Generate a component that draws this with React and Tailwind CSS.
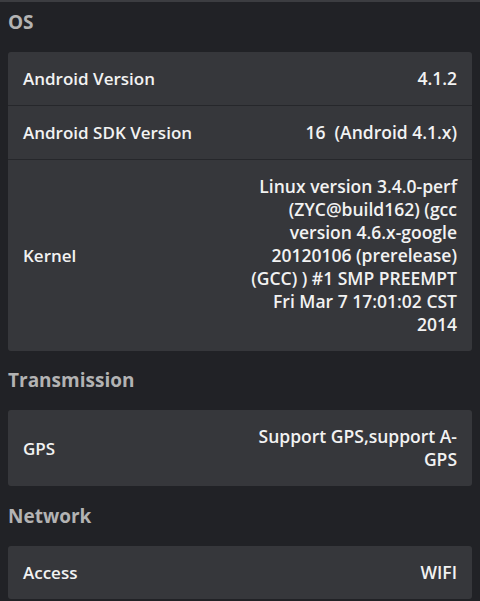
export default function App() {
  const font = { fontFamily: '"Open Sans", "DejaVu Sans", sans-serif' };
  const Row = ({ label, children, first }) => (
    <div
      className={`flex items-center justify-between px-[15px] py-[15px] ${
        first ? "" : "border-t border-[#26272b]"
      }`}
    >
      <div className="text-[17px] font-semibold leading-[23px] text-[#f2f2f2]">{label}</div>
      <div className="w-[220px] text-right text-[17.5px] font-semibold leading-[23px] text-[#f2f2f2]">
        {children}
      </div>
    </div>
  );
  const Heading = ({ children, cls }) => (
    <div className={`flex items-center px-[8px] text-[19px] font-bold text-[#b3b3b3] ${cls}`}>
      {children}
    </div>
  );
  const Card = ({ children }) => (
    <div className="ml-[8px] mr-[8px] overflow-hidden rounded-[3px] bg-[#36373b]">{children}</div>
  );
  return (
    <div className="h-[601px] w-[480px] overflow-hidden border-t-2 border-[#3c3d41] bg-[#212226]" style={font}>
      <Heading cls="h-[50px] pb-[9px]">OS</Heading>
      <Card>
        <Row label="Android Version" first>
          4.1.2
        </Row>
        <Row label="Android SDK Version">16&nbsp; (Android 4.1.x)</Row>
        <Row label="Kernel">
          Linux version 3.4.0-perf
          <br />
          (ZYC@build162) (gcc
          <br />
          version 4.6.x-google
          <br />
          20120106 (prerelease)
          <br />
          (GCC) ) #1 SMP PREEMPT
          <br />
          Fri Mar 7 17:01:02 CST
          <br />
          2014
        </Row>
      </Card>
      <Heading cls="h-[59px]">Transmission</Heading>
      <Card>
        <Row label="GPS" first>
          Support GPS,support A-
          <br />
          GPS
        </Row>
      </Card>
      <Heading cls="h-[60px]">Network</Heading>
      <Card>
        <Row label="Access" first>
          WIFI
        </Row>
      </Card>
    </div>
  );
}
